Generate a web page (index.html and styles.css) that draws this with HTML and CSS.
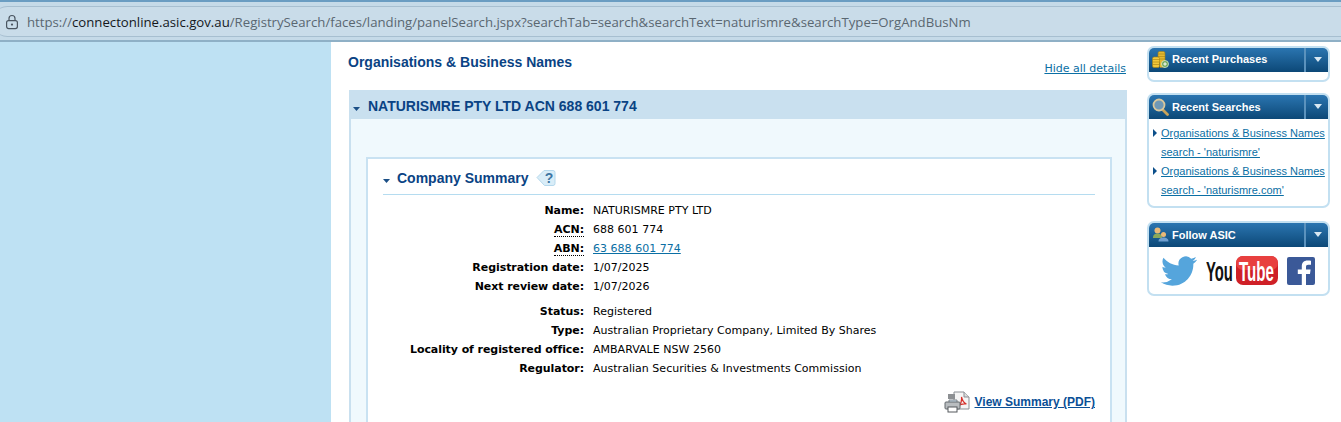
FILE: index.html
```html
<!DOCTYPE html>
<html lang="en">
<head>
<meta charset="utf-8">
<title>ASIC Connect - Organisations &amp; Business Names</title>
<link rel="stylesheet" href="styles.css">
</head>
<body>
<header class="chrome">
  <div class="urlbar">
    <svg class="lock" width="14" height="16" viewBox="0 0 14 16"><path d="M4 7V4.500a3 3 0 0 1 6 0V7" fill="none" stroke="#4a5560" stroke-width="1.200"/><rect x="1.600" y="6.600" width="10.800" height="8" rx="2" fill="none" stroke="#4a5560" stroke-width="1.200"/><circle cx="7" cy="10.600" r="1.100" fill="#4a5560"/></svg>
    <span class="url">https://<b>connectonline.asic.gov.au</b>/RegistrySearch/faces/landing/panelSearch.jspx?searchTab=search&amp;searchText=naturismre&amp;searchType=OrgAndBusNm</span>
  </div>
</header>
<div class="page">
  <aside class="leftnav"></aside>
  <main class="main">
    <div class="titlerow">
      <h1 class="pagetitle">Organisations &amp; Business Names</h1>
      <a class="hide" href="#">Hide all details</a>
    </div>
    <section class="panel">
      <h2 class="panelhead"><svg class="caret" width="7" height="4" viewBox="0 0 7 4"><path d="M0 0h7L3.500 4z" fill="#1b4f86"/></svg>NATURISMRE PTY LTD ACN 688 601 774</h2>
      <div class="panelbody">
        <div class="summary">
          <h3 class="sumhead"><svg class="caret" width="7" height="4" viewBox="0 0 7 4"><path d="M0 0h7L3.500 4z" fill="#1b4f86"/></svg>Company Summary
            <svg class="help" width="20" height="18" viewBox="0 0 20 18"><path d="M8 1.500h9a2 2 0 0 1 2 2v11a2 2 0 0 1-2 2H8.500L1 8.500z" fill="#d9edf8" stroke="#b5d8ec"/><text x="13" y="13.500" class="helpq">?</text></svg>
          </h3>
          <dl class="facts">
            <dt>Name:</dt><dd>NATURISMRE PTY LTD</dd>
            <dt><abbr>ACN:</abbr></dt><dd>688 601 774</dd>
            <dt><abbr>ABN:</abbr></dt><dd><a href="#">63 688 601 774</a></dd>
            <dt>Registration date:</dt><dd>1/07/2025</dd>
            <dt>Next review date:</dt><dd>1/07/2026</dd>
          </dl>
          <dl class="facts second">
            <dt>Status:</dt><dd>Registered</dd>
            <dt>Type:</dt><dd>Australian Proprietary Company, Limited By Shares</dd>
            <dt>Locality of registered office:</dt><dd>AMBARVALE NSW 2560</dd>
            <dt>Regulator:</dt><dd>Australian Securities &amp; Investments Commission</dd>
          </dl>
          <div class="pdfrow">
            <svg width="26" height="22" viewBox="0 0 26 22"><path d="M10 1h10l5 5v12H10z" fill="#f4f4f4" stroke="#8b8f94"/><path d="M20 1v5h5" fill="#dcdcdc" stroke="#8b8f94"/><path d="M14 15c3-1 4-6 3.500-9 1 4 2 6 5 7-3-.5-6 .2-8.500 2z" fill="none" stroke="#d8302a" stroke-width="1.200"/><rect x="4" y="3" width="7" height="5" fill="#8c8f92"/><path d="M5 9h8v4H5z" fill="#cfe3f2" stroke="#7c8288"/><rect x="1" y="11" width="15" height="7" rx="1" fill="#b9bdc0" stroke="#63686d"/><rect x="4" y="16" width="9" height="5" fill="#fff" stroke="#55595d"/></svg>
            <a class="pdflink" href="#">View Summary (PDF)</a>
          </div>
        </div>
      </div>
    </section>
  </main>
  <aside class="rail">
    <section class="widget short">
      <div class="wtitle">
        <svg class="wicon" width="17" height="17" viewBox="0 0 17 17"><rect x="6" y="0.500" width="7" height="11" rx="1.500" fill="#e6b92f" stroke="#a37f14" stroke-width=".6"/><path d="M6 3h7M6 5.500h7M6 8h7" stroke="#a37f14" stroke-width=".6"/><rect x="0.500" y="6" width="7" height="10.500" rx="1.500" fill="#f2c83a" stroke="#a37f14" stroke-width=".6"/><path d="M0.500 8.500h7M0.500 11h7M0.500 13.500h7" stroke="#a37f14" stroke-width=".6"/><rect x="8" y="9" width="5" height="7.500" fill="#e6b92f"/><circle cx="13" cy="13" r="3.500" fill="#6fa85a" stroke="#eaf4e2" stroke-width=".7"/><path d="M11.200 13h3.600M13 11.200v3.600" stroke="#fff"/></svg>
        <span class="wname">Recent Purchases</span><span class="wmenu"><i class="wtri"></i></span>
      </div>
      <div class="wbody"></div>
    </section>
    <section class="widget mid">
      <div class="wtitle">
        <svg class="wicon" width="17" height="18" viewBox="0 0 17 18"><path d="M10 11l5.500 5.500" stroke="#c9a35a" stroke-width="2.800" stroke-linecap="round"/><circle cx="7" cy="7" r="5.500" fill="#6f98b6" stroke="#d9c79c" stroke-width="1.800"/></svg>
        <span class="wname">Recent Searches</span><span class="wmenu"><i class="wtri"></i></span>
      </div>
      <ul class="wbody searches">
        <li><a href="#">Organisations &amp; Business Names search - 'naturismre'</a></li>
        <li><a href="#">Organisations &amp; Business Names search - 'naturismre.com'</a></li>
      </ul>
    </section>
    <section class="widget tall">
      <div class="wtitle">
        <svg class="wicon" width="17" height="15" viewBox="0 0 17 15"><circle cx="5.500" cy="3.500" r="3" fill="#e9b978"/><path d="M1 11c0-3.500 2-4.500 4.500-4.500S10 7.500 10 11z" fill="#8ba85a"/><circle cx="11.500" cy="7.500" r="2.500" fill="#e9b978"/><path d="M6.500 14.500c0-3 2.500-4 5-4s5 1 5 4z" fill="#6f9fd0"/></svg>
        <span class="wname">Follow ASIC</span><span class="wmenu"><i class="wtri"></i></span>
      </div>
      <div class="wbody social">
        <svg class="bird" width="36" height="30" viewBox="0 0 24 20"><path transform="translate(0 -2)" d="M23.953 4.570a10 10 0 0 1-2.825.775 4.958 4.958 0 0 0 2.163-2.723c-.951.555-2.005.959-3.127 1.184a4.920 4.920 0 0 0-8.384 4.482C7.690 8.095 4.067 6.130 1.640 3.162a4.822 4.822 0 0 0-.666 2.475c0 1.710.870 3.213 2.188 4.096a4.904 4.904 0 0 1-2.228-.616v.060a4.923 4.923 0 0 0 3.946 4.827 4.996 4.996 0 0 1-2.212.085 4.936 4.936 0 0 0 4.604 3.417 9.867 9.867 0 0 1-6.102 2.105c-.390 0-.779-.023-1.170-.067a13.995 13.995 0 0 0 7.557 2.209c9.053 0 13.998-7.496 13.998-13.985 0-.210 0-.420-.015-.630A9.935 9.935 0 0 0 24 4.590z" fill="#55a5dc"/></svg>
        <svg class="yt" width="72" height="30" viewBox="0 0 72 30"><text transform="translate(0 25) scale(.53 1)" class="ytyou">You</text><rect x="30" y="0" width="42" height="29" rx="7" fill="#cf2027"/><rect x="30" y="0" width="42" height="14" rx="7" fill="#e8403f"/><text transform="translate(33 25) scale(.54 1)" class="yttube">Tube</text></svg>
        <svg class="fb" width="28" height="28" viewBox="0 0 28 28"><rect width="28" height="28" rx="2" fill="#3b5998"/><path d="M19 28V17h4l.600-4.500H19V10c0-1.400.600-2.200 2.300-2.200H24V3.700C23.400 3.600 22 3.500 20.500 3.500c-3.500 0-5.700 2.100-5.700 5.900v3.100h-4V17h4v11z" fill="#fff"/></svg>
      </div>
    </section>
  </aside>
</div>
</body>
</html>
```
FILE: styles.css
```css
* { box-sizing: border-box; }
html, body { margin: 0; padding: 0; height: 422px; overflow: hidden; background: #fff; }
body { font-family: "DejaVu Sans", sans-serif; font-size: 11px; color: #000; }
a { color: #0b6fa4; }

.chrome { height: 42px; background: #c5dae8; border-top: 2px solid #6a9dc2; border-bottom: 2px solid #8fb0c6; padding-top: 4px; }
.urlbar { height: 31px; margin-left: -8px; padding-left: 13px; display: flex; align-items: center; gap: 8px; background: #c9dce9; border: 1px solid #a7bfd0; border-left: 0; border-right: 0; border-radius: 16px 0 0 16px; }
.lock { flex: none; }
.url { font-family: "Open Sans", sans-serif; font-size: 13.200px; color: #5a6771; white-space: nowrap; }
.url b { font-weight: 400; color: #14181c; }

.page { display: flex; height: 380px; overflow: hidden; }
.leftnav { width: 331px; flex: none; background: #bee1f3; }
.main { width: 796px; flex: none; padding-left: 17px; overflow: hidden; }
.titlerow { height: 48px; display: flex; justify-content: space-between; align-items: flex-start; padding-right: 1px; }
.pagetitle { margin: 12px 0 0; font: bold 14px/16px "Liberation Sans", sans-serif; color: #0a4384; }
.hide { margin-top: 20px; line-height: 14px; }

.panel { margin-left: 1px; }
.panelhead { margin: 0; height: 29px; display: flex; align-items: center; background: #c9e0ef; padding: 2px 0 0 4px; font: bold 14px "Liberation Sans", sans-serif; color: #0a4384; }
.panelhead .caret { margin: 6px 8px 0 0; }
.panelbody { background: #f0f9fd; border: solid #c9e0ef; border-width: 0 2px; padding: 38px 13px 0 15px; height: 320px; }
.summary { background: #fff; border: 2px solid #c9e2f2; padding: 0 15px; height: 300px; }
.sumhead { margin: 0; height: 36px; display: flex; align-items: center; border-bottom: 1px solid #b5dcf0; padding-top: 3px; font: bold 14px "Liberation Sans", sans-serif; color: #0a4384; }
.sumhead .caret { margin: 6px 7px 0 0; }
.help { margin-left: 8px; }
.helpq { font: bold 14px "Liberation Sans", sans-serif; fill: #3f76a3; text-anchor: middle; }

.facts { display: grid; grid-template-columns: 201px 1fr; column-gap: 9px; grid-auto-rows: 19px; line-height: 19px; margin: 6px 0 0; }
.facts.second { margin-top: 6px; }
.facts dt { font-weight: bold; text-align: right; white-space: nowrap; letter-spacing: -.07px; }
.facts dd { margin: 0; white-space: nowrap; letter-spacing: .02px; }
.facts abbr { border-bottom: 1px dotted #000; }

.pdfrow { display: flex; justify-content: flex-end; align-items: center; gap: 5px; margin-top: 13px; }
.pdflink { font: bold 12px "Liberation Sans", sans-serif; color: #0a4f96; }

.rail { width: 183px; flex: none; margin-left: 20px; padding-top: 4px; display: flex; flex-direction: column; }
.widget { border: 2px solid #c3e0f1; border-radius: 7px; background: #fff; overflow: hidden; }
.widget.short { height: 36px; margin-bottom: 11px; }
.widget.short .wname { padding-bottom: 2px; }
.widget.mid { height: 115px; margin-bottom: 13px; }
.widget.tall { height: 75px; }
.wtitle { height: 25px; margin: -1px -1px 0; display: flex; align-items: center; background: linear-gradient(#2c77b3, #0c4877); color: #fff; font: bold 11px "Liberation Sans", sans-serif; }
.wicon { flex: none; margin: 0 3px 0 4px; }
.wname { flex: 1; white-space: nowrap; }
.wmenu { width: 25px; height: 100%; border-left: 2px solid #5b92bd; display: flex; align-items: center; justify-content: center; }
.wtri { width: 0; height: 0; border: solid transparent; border-width: 5px 4.500px 0; border-top-color: #d9e8f2; }
.wbody { margin: 0; }
.searches { list-style: none; padding: 5px 0 5px 12px; font: 11px/19px "Liberation Sans", sans-serif; }
.searches li { position: relative; }
.searches li::before { content: ""; position: absolute; left: -8px; top: 5px; border: solid transparent; border-width: 4px 0 4px 4px; border-left-color: #0c4f8a; }
.social { display: flex; align-items: center; padding: 0 0 0 12px; height: 47px; }
.yt { margin-left: 9px; }
.fb { margin-left: 9px; }
.ytyou { font: bold 28px "Liberation Sans", sans-serif; fill: #111; }
.yttube { font: bold 28px "Liberation Sans", sans-serif; fill: #fff; }
```
